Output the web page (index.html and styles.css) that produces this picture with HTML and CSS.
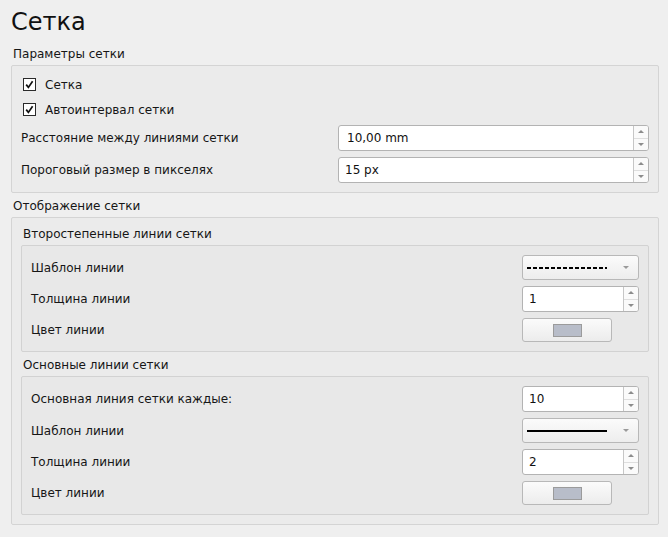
FILE: index.html
```html
<!DOCTYPE html>
<html lang="ru">
<head>
<meta charset="utf-8">
<title>Сетка</title>
<link rel="stylesheet" href="styles.css">
</head>
<body>
<h1 class="title">Сетка</h1>

<div class="group-title">Параметры сетки</div>
<div class="box box-main">
  <div class="check-row">
    <span class="check"><svg width="13" height="13" viewBox="0 0 13 13"><path d="M3.2 6.6 L5.4 9.4 L9.6 3.2" fill="none" stroke="#111" stroke-width="1.7"/></svg></span>
    <span>Сетка</span>
  </div>
  <div class="check-row">
    <span class="check"><svg width="13" height="13" viewBox="0 0 13 13"><path d="M3.2 6.6 L5.4 9.4 L9.6 3.2" fill="none" stroke="#111" stroke-width="1.7"/></svg></span>
    <span>Автоинтервал сетки</span>
  </div>
  <div class="row">
    <span class="label">Расстояние между линиями сетки</span>
    <div class="spin spin-wide">
      <span class="spin-text spin-text-wide">10,00 mm</span>
      <span class="spin-arrows"><span class="arr up"></span><span class="arr down"></span></span>
    </div>
  </div>
  <div class="row">
    <span class="label">Пороговый размер в пикселях</span>
    <div class="spin spin-wide">
      <span class="spin-text">15 px</span>
      <span class="spin-arrows"><span class="arr up"></span><span class="arr down"></span></span>
    </div>
  </div>
</div>

<div class="group-title gt2">Отображение сетки</div>
<div class="box box-main box-display">
  <div class="sub-title">Второстепенные линии сетки</div>
  <div class="box box-inner">
    <div class="row">
      <span class="label">Шаблон линии</span>
      <div class="ctrl">
        <div class="combo">
          <svg class="pattern" width="80" height="4" viewBox="0 0 80 4"><line x1="0" y1="2" x2="80" y2="2" stroke="#000" stroke-width="2" stroke-dasharray="4 2"/></svg>
          <span class="combo-arrow"></span>
        </div>
      </div>
    </div>
    <div class="row">
      <span class="label">Толщина линии</span>
      <div class="ctrl">
        <div class="spin spin-small">
          <span class="spin-text">1</span>
          <span class="spin-arrows"><span class="arr up"></span><span class="arr down"></span></span>
        </div>
      </div>
    </div>
    <div class="row">
      <span class="label">Цвет линии</span>
      <div class="ctrl">
        <div class="color-btn"><span class="swatch"></span></div>
      </div>
    </div>
  </div>

  <div class="sub-title st2">Основные линии сетки</div>
  <div class="box box-inner">
    <div class="row">
      <span class="label">Основная линия сетки каждые:</span>
      <div class="ctrl">
        <div class="spin spin-small">
          <span class="spin-text">10</span>
          <span class="spin-arrows"><span class="arr up"></span><span class="arr down"></span></span>
        </div>
      </div>
    </div>
    <div class="row">
      <span class="label">Шаблон линии</span>
      <div class="ctrl">
        <div class="combo">
          <svg class="pattern" width="80" height="4" viewBox="0 0 80 4"><line x1="0" y1="2" x2="80" y2="2" stroke="#000" stroke-width="2"/></svg>
          <span class="combo-arrow"></span>
        </div>
      </div>
    </div>
    <div class="row">
      <span class="label">Толщина линии</span>
      <div class="ctrl">
        <div class="spin spin-small">
          <span class="spin-text">2</span>
          <span class="spin-arrows"><span class="arr up"></span><span class="arr down"></span></span>
        </div>
      </div>
    </div>
    <div class="row">
      <span class="label">Цвет линии</span>
      <div class="ctrl">
        <div class="color-btn"><span class="swatch"></span></div>
      </div>
    </div>
  </div>
</div>
</body>
</html>
```

FILE: styles.css
```css
html, body {
  margin: 0;
  background: #efefef;
}
body {
  padding: 0 9px 0 11px;
  font-family: "DejaVu Sans", "Noto Sans", sans-serif;
  font-size: 12px;
  color: #161616;
}
.title {
  margin: 0;
  padding-top: 8px;
  font-size: 24px;
  font-weight: normal;
  line-height: 28px;
  height: 28px;
  color: #111;
}
.group-title {
  margin-top: 9px;
  height: 15px;
  padding-top: 1px;
  line-height: 16px;
  padding-left: 2px;
  margin-bottom: 4px;
}
.gt2 {
  margin-top: 4px;
}
.box {
  border: 1px solid #d4d4d4;
  border-radius: 2px;
  box-sizing: border-box;
}
.box-main {
  background: #ebebeb;
  padding: 9px 9px 9px 9px;
  display: flex;
  flex-direction: column;
  gap: 6px;
}
.box-display {
  padding-top: 7px;
  gap: 0;
}
.sub-title {
  height: 15px;
  padding-top: 1px;
  line-height: 16px;
  padding-left: 2px;
  margin-bottom: 4px;
}
.st2 {
  margin-top: 4px;
}
.box-inner {
  background: #e8e8e8;
  border-color: #d2d2d2;
  padding: 9px;
  display: flex;
  flex-direction: column;
  gap: 6px;
}
.check-row {
  height: 19px;
  display: flex;
  align-items: center;
  padding-left: 2px;
}
.check {
  width: 13px;
  height: 13px;
  box-sizing: border-box;
  border: 1px solid #2a2a2a;
  background: #fff;
  margin-right: 9px;
  display: flex;
  align-items: center;
  justify-content: center;
}
.check svg {
  display: block;
  margin: -1px;
}
.row {
  display: flex;
  align-items: center;
  justify-content: space-between;
}
.ctrl {
  width: 117px;
  display: flex;
}
.spin {
  display: flex;
  height: 26px;
  box-sizing: border-box;
  border: 1px solid #b3b3b3;
  border-radius: 3px;
  background: #fff;
}
.spin-wide {
  width: 311px;
}
.spin-small {
  width: 117px;
}
.spin-text {
  flex: 1;
  display: flex;
  align-items: center;
  padding-left: 6px;
  color: #111;
}
.spin-text-wide {
  padding-left: 8px;
}
.spin-arrows {
  width: 14px;
  border-left: 1px solid #c6c6c6;
  display: flex;
  flex-direction: column;
  background: #fafafa;
  border-radius: 0 2px 2px 0;
}
.arr {
  flex: 1;
  display: flex;
  align-items: center;
  justify-content: center;
}
.arr.up {
  border-bottom: 1px solid #dedede;
}
.arr::before {
  content: "";
  width: 0;
  height: 0;
  border-left: 3px solid transparent;
  border-right: 3px solid transparent;
}
.arr.up::before {
  border-bottom: 3px solid #8c8c8c;
}
.arr.down::before {
  border-top: 3px solid #8c8c8c;
}
.combo {
  width: 117px;
  height: 25px;
  box-sizing: border-box;
  border: 1px solid #b8b8b8;
  border-radius: 3px;
  background: linear-gradient(#fbfbfb, #ededed);
  display: flex;
  align-items: center;
  padding-left: 4px;
  padding-right: 9px;
  justify-content: space-between;
}
.pattern {
  display: block;
}
.combo-arrow {
  width: 0;
  height: 0;
  border-left: 3px solid transparent;
  border-right: 3px solid transparent;
  border-top: 3px solid #9a9a9a;
}
.color-btn {
  width: 90px;
  height: 24px;
  box-sizing: border-box;
  border: 1px solid #b8b8b8;
  border-radius: 3px;
  background: linear-gradient(#fbfbfb, #ececec);
  display: flex;
  align-items: center;
  justify-content: center;
}
.swatch {
  width: 29px;
  height: 13px;
  box-sizing: border-box;
  border: 1px solid #9b9b9b;
  background: #b8bdc9;
}
```
